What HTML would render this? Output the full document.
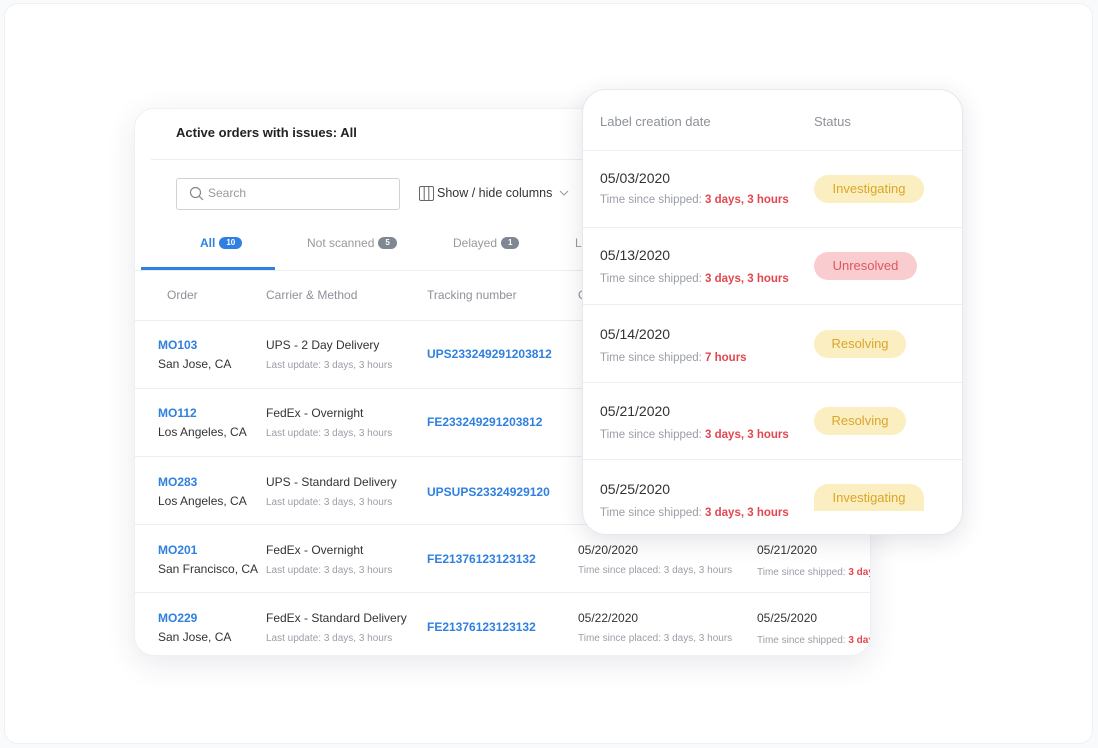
<!DOCTYPE html>
<html><head><meta charset="utf-8"><style>
*{margin:0;padding:0;box-sizing:border-box}
body{width:1098px;height:748px;background:#f9fafb;font-family:"Liberation Sans",sans-serif;position:relative;overflow:hidden}
.frame{position:absolute;left:4px;top:3px;width:1089px;height:741px;border:1px solid #eef0f2;border-radius:14px;background:#fff}
.a{position:absolute;white-space:nowrap}
.card{position:absolute;background:#fff;border-radius:20px;overflow:hidden}
.L{left:134px;top:108px;width:737px;height:548px;box-shadow:0 8px 30px rgba(30,40,70,.10);border:1px solid #eef0f3}
.R{left:582px;top:89px;width:381px;height:446px;border-radius:24px;box-shadow:0 6px 24px rgba(30,40,70,.13);border:1px solid #e6e8ec}
.hr{position:absolute;height:1px;background:#eceef1}
.blue{color:#2f80e0;font-weight:bold;font-size:12px}
.dk{color:#333;font-size:12px}
.gr{color:#9a9ea6;font-size:10px}
.hd{color:#8d9198;font-size:12px}
.bd{position:absolute;height:28px;border-radius:14px;font-size:13px;line-height:28px;text-align:center}
.y{background:#fbeec0;color:#d9a62a}
.r{background:#f9ccd0;color:#e0575f}
.red{color:#e2474f;font-weight:bold}
.pill{display:inline-block;border-radius:8px;font-size:8px;color:#fff;padding:0 7px;height:12px;line-height:12px;vertical-align:2px;margin-left:4px;font-weight:bold}
.sub{font-size:11.5px}
</style></head><body>
<div class="frame"></div>
<div class="card L">
<div class="a" style="left:41px;top:16px;font-size:13px;font-weight:bold;color:#222">Active orders with issues: All</div>
<div class="hr" style="left:16px;right:0;top:50px"></div>
<div class="a" style="left:41px;top:69px;width:224px;height:32px;border:1px solid #cfd3d8;border-radius:3px"></div>
<svg class="a" style="left:54px;top:77px" width="16" height="16" viewBox="0 0 16 16"><circle cx="6.5" cy="6.5" r="5" fill="none" stroke="#888" stroke-width="1.2"/><path d="M10.3 10.3L14 14" stroke="#888" stroke-width="1.2"/></svg>
<div class="a" style="left:73px;top:77px;font-size:12px;color:#999">Search</div>
<svg class="a" style="left:284px;top:77px" width="15" height="15" viewBox="0 0 15 15"><rect x="0.5" y="0.5" width="14" height="14" rx="1.5" fill="none" stroke="#666"/><path d="M5.2 1v13M9.8 1v13" stroke="#666"/></svg>
<div class="a" style="left:302px;top:77px;font-size:12.5px;color:#333">Show / hide columns</div>
<svg class="a" style="left:424px;top:81px" width="10" height="7" viewBox="0 0 10 7"><path d="M1 1l4 4 4-4" fill="none" stroke="#999"/></svg>
<div class="a" style="left:65px;top:127px;font-size:12px;color:#2f80e0;font-weight:bold">All<span class="pill" style="background:#2f80e0">10</span></div>
<div class="a" style="left:172px;top:127px;font-size:12px;color:#999">Not scanned<span class="pill" style="background:#7f8793">5</span></div>
<div class="a" style="left:318px;top:127px;font-size:12px;color:#999">Delayed<span class="pill" style="background:#7f8793">1</span></div>
<div class="a" style="left:440px;top:127px;font-size:12px;color:#999">Le</div>
<div style="position:absolute;left:6px;top:158px;width:134px;height:3px;background:#2f80e0"></div>
<div class="hr" style="left:0;right:0;top:161px"></div>
<div class="a hd" style="left:32px;top:179px">Order</div>
<div class="a hd" style="left:131px;top:179px">Carrier &amp; Method</div>
<div class="a hd" style="left:292px;top:179px">Tracking number</div>
<div class="a hd" style="left:443px;top:179px">C</div>
<div class="hr" style="left:0;right:0;top:211px"></div>
<div class="hr" style="left:0;right:0;top:279px"></div>
<div class="hr" style="left:0;right:0;top:347px"></div>
<div class="hr" style="left:0;right:0;top:415px"></div>
<div class="hr" style="left:0;right:0;top:483px"></div>

<div class="a blue" style="left:23px;top:229px">MO103</div><div class="a dk" style="left:23px;top:248px">San Jose, CA</div>
<div class="a dk" style="left:131px;top:229px">UPS - 2 Day Delivery</div><div class="a gr" style="left:131px;top:251px">Last update: 3 days, 3 hours</div>
<div class="a blue" style="left:292px;top:238px">UPS233249291203812</div>

<div class="a blue" style="left:23px;top:297px">MO112</div><div class="a dk" style="left:23px;top:316px">Los Angeles, CA</div>
<div class="a dk" style="left:131px;top:297px">FedEx - Overnight</div><div class="a gr" style="left:131px;top:319px">Last update: 3 days, 3 hours</div>
<div class="a blue" style="left:292px;top:306px">FE233249291203812</div>

<div class="a blue" style="left:23px;top:366px">MO283</div><div class="a dk" style="left:23px;top:385px">Los Angeles, CA</div>
<div class="a dk" style="left:131px;top:366px">UPS - Standard Delivery</div><div class="a gr" style="left:131px;top:388px">Last update: 3 days, 3 hours</div>
<div class="a blue" style="left:292px;top:376px">UPSUPS23324929120</div>

<div class="a blue" style="left:23px;top:434px">MO201</div><div class="a dk" style="left:23px;top:453px">San Francisco, CA</div>
<div class="a dk" style="left:131px;top:434px">FedEx - Overnight</div><div class="a gr" style="left:131px;top:456px">Last update: 3 days, 3 hours</div>
<div class="a blue" style="left:292px;top:443px">FE21376123123132</div>
<div class="a dk" style="left:443px;top:434px">05/20/2020</div><div class="a gr" style="left:443px;top:456px">Time since placed: 3 days, 3 hours</div>
<div class="a dk" style="left:622px;top:434px">05/21/2020</div><div class="a gr" style="left:622px;top:458px">Time since shipped: <span class="red">3 days</span></div>

<div class="a blue" style="left:23px;top:502px">MO229</div><div class="a dk" style="left:23px;top:521px">San Jose, CA</div>
<div class="a dk" style="left:131px;top:502px">FedEx - Standard Delivery</div><div class="a gr" style="left:131px;top:524px">Last update: 3 days, 3 hours</div>
<div class="a blue" style="left:292px;top:511px">FE21376123123132</div>
<div class="a dk" style="left:443px;top:502px">05/22/2020</div><div class="a gr" style="left:443px;top:524px">Time since placed: 3 days, 3 hours</div>
<div class="a dk" style="left:622px;top:502px">05/25/2020</div><div class="a gr" style="left:622px;top:526px">Time since shipped: <span class="red">3 days</span></div>
</div>

<div class="card R">
<div class="a" style="left:17px;top:24px;font-size:13px;color:#8d9198">Label creation date</div>
<div class="a" style="left:231px;top:24px;font-size:13px;color:#8d9198">Status</div>
<div class="hr" style="left:0;right:0;top:60px"></div>
<div class="hr" style="left:0;right:0;top:137px"></div>
<div class="hr" style="left:0;right:0;top:214px"></div>
<div class="hr" style="left:0;right:0;top:292px"></div>
<div class="hr" style="left:0;right:0;top:369px"></div>

<div class="a" style="left:17px;top:80px;font-size:14px;color:#333">05/03/2020</div>
<div class="a gr sub" style="left:17px;top:104px">Time since shipped: <span class="red">3 days, 3 hours</span></div>
<div class="bd y" style="left:231px;top:85px;width:110px">Investigating</div>

<div class="a" style="left:17px;top:157px;font-size:14px;color:#333">05/13/2020</div>
<div class="a gr sub" style="left:17px;top:183px">Time since shipped: <span class="red">3 days, 3 hours</span></div>
<div class="bd r" style="left:231px;top:162px;width:103px">Unresolved</div>

<div class="a" style="left:17px;top:236px;font-size:14px;color:#333">05/14/2020</div>
<div class="a gr sub" style="left:17px;top:262px">Time since shipped: <span class="red">7 hours</span></div>
<div class="bd y" style="left:231px;top:240px;width:92px">Resolving</div>

<div class="a" style="left:17px;top:313px;font-size:14px;color:#333">05/21/2020</div>
<div class="a gr sub" style="left:17px;top:339px">Time since shipped: <span class="red">3 days, 3 hours</span></div>
<div class="bd y" style="left:231px;top:317px;width:92px">Resolving</div>

<div class="a" style="left:17px;top:391px;font-size:14px;color:#333">05/25/2020</div>
<div class="a gr sub" style="left:17px;top:417px">Time since shipped: <span class="red">3 days, 3 hours</span></div>
<div class="bd y" style="left:231px;top:394px;width:110px;height:27px;border-radius:14px 14px 0 0;overflow:hidden">Investigating</div>
</div>
</body></html>
